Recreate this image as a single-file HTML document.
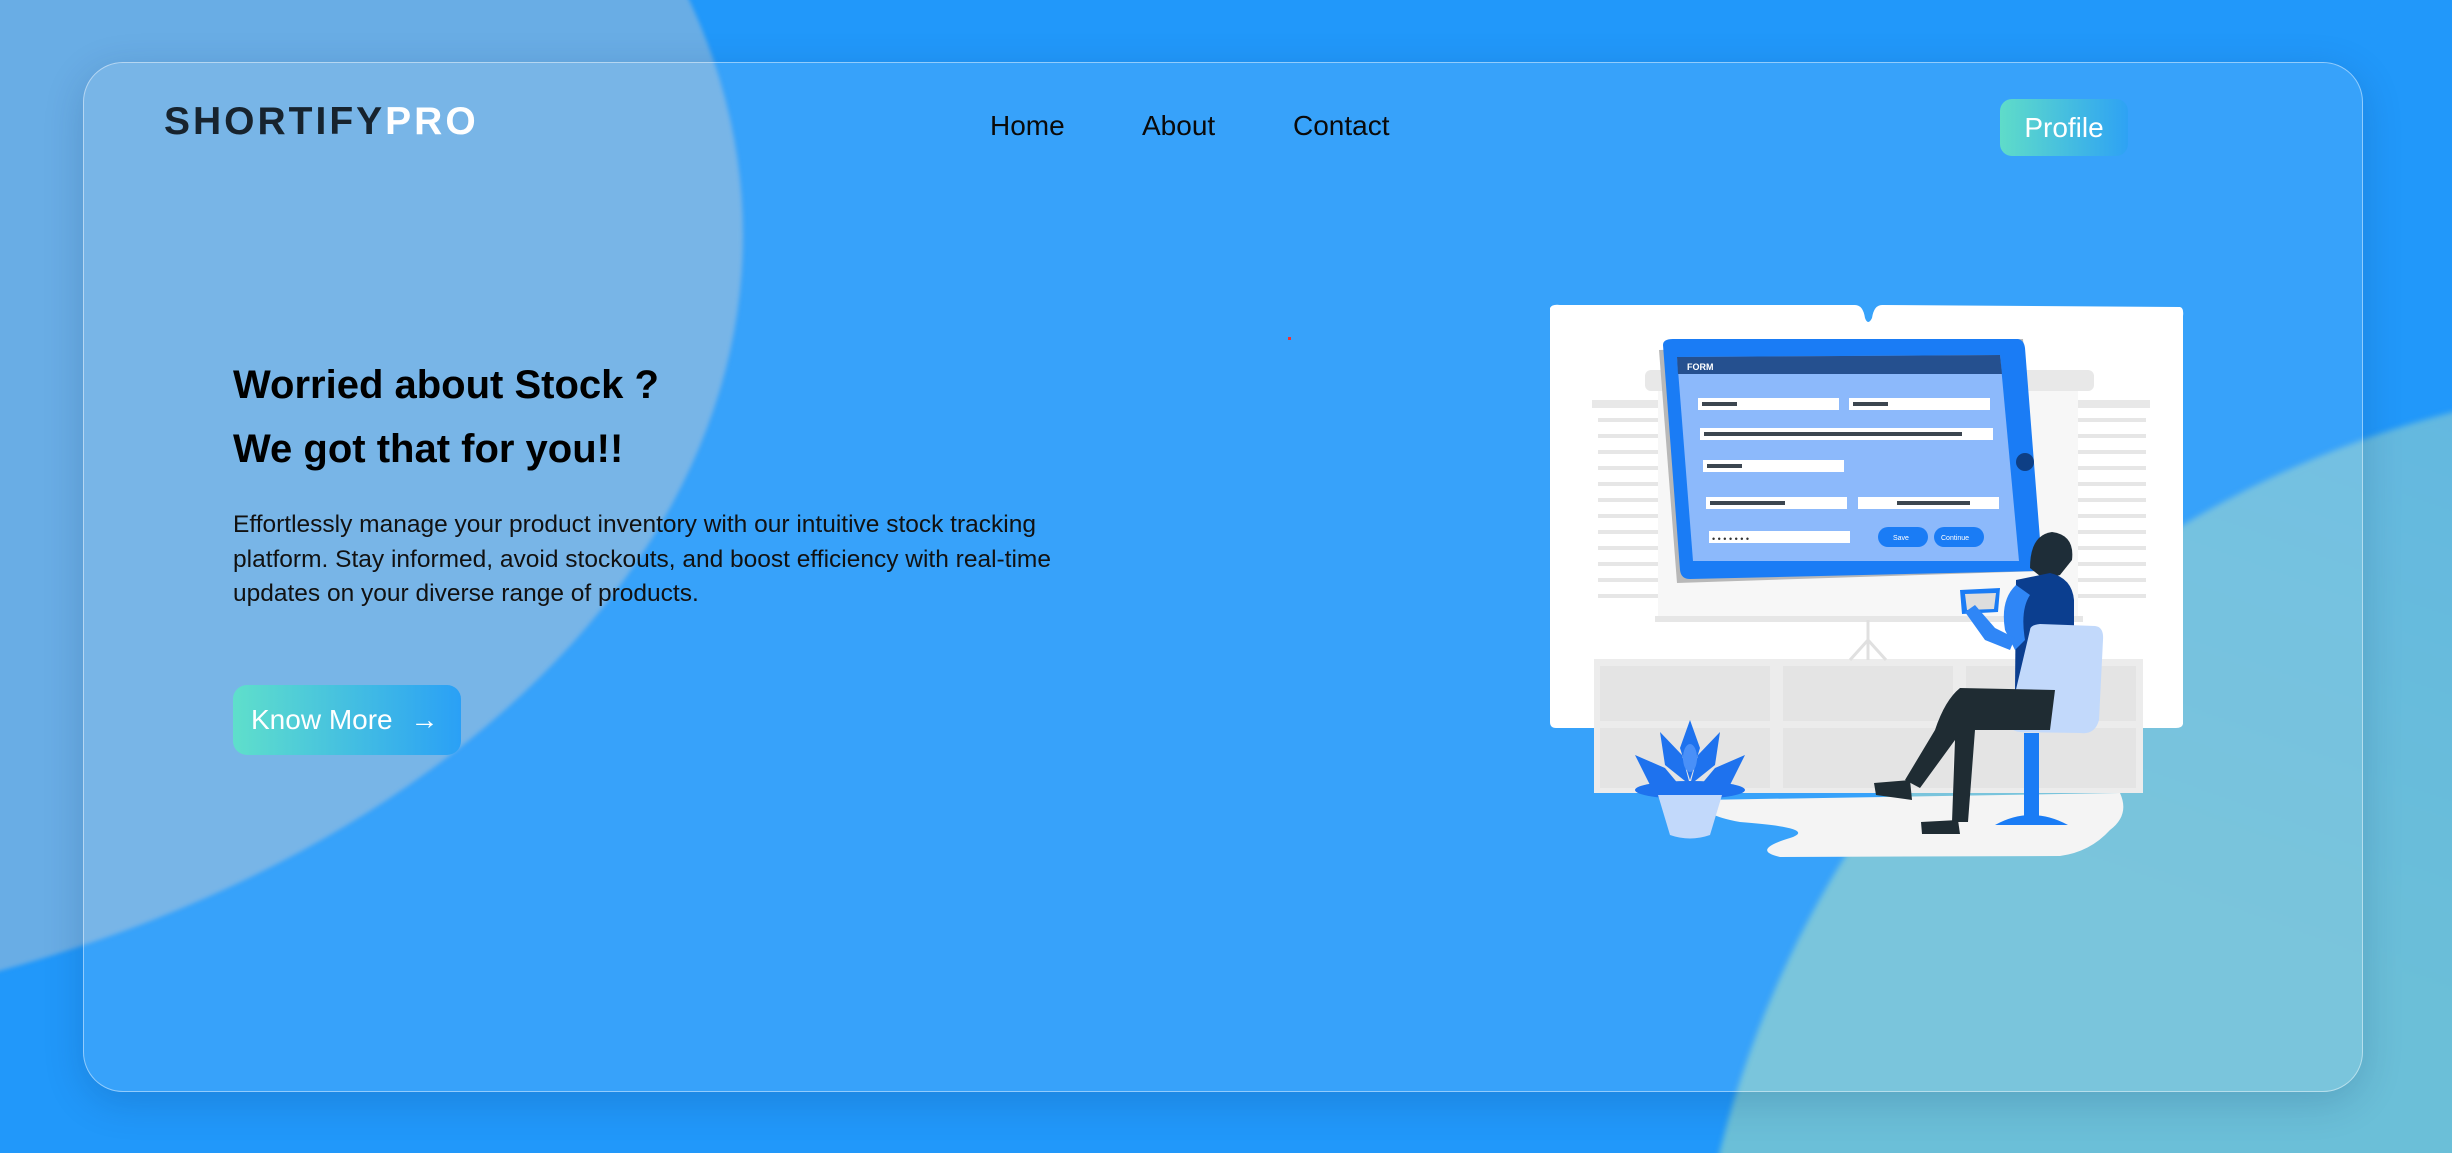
<!DOCTYPE html>
<html><head><meta charset="utf-8"><style>
html,body{margin:0;padding:0;width:2452px;height:1153px;overflow:hidden;background:#2198fa;font-family:"Liberation Sans",sans-serif}
#wrap{position:relative;width:2452px;height:1153px;overflow:hidden}
.blobL{position:absolute;left:-1681px;top:-563px;width:2424px;height:1596px;border-radius:50%;background:#69ade5;filter:blur(2px)}
.blobR{position:absolute;left:1690px;top:380px;width:2032px;height:2032px;border-radius:50%;background:linear-gradient(200deg,#5eb3e6 0%,#6bbfd8 40%,#6cc0d6 100%);filter:blur(3px)}
.card{position:absolute;left:83px;top:62px;width:2280px;height:1030px;border-radius:40px;background:rgba(255,255,255,0.1);border:1.5px solid rgba(255,255,255,0.45);box-shadow:0 10px 40px rgba(0,40,90,0.18);box-sizing:border-box}
.logo{position:absolute;left:164px;top:100px;font-size:39px;font-weight:bold;letter-spacing:3px;color:#17232e}
.logo span{color:#fff}
.nav{position:absolute;top:110px;font-size:28px;color:#0a0a0a}
.profile{position:absolute;left:2000px;top:99px;width:128px;height:57px;border-radius:12px;background:linear-gradient(90deg,#5fdcc9,#2ea2f4);color:#fff;font-size:28px;text-align:center;line-height:57px}
h1{position:absolute;left:233px;top:353px;margin:0;font-size:40px;line-height:64px;font-weight:bold;color:#000}
.p{position:absolute;left:233px;top:508px;font-size:24.5px;line-height:34.5px;color:#111}
.btn{position:absolute;left:233px;top:685px;width:228px;height:70px;border-radius:14px;background:linear-gradient(90deg,#5fdfcb,#2aa0f6);color:#fff;font-size:28px;line-height:70px;box-sizing:border-box;padding-left:18px}
</style></head><body><div id="wrap">
<div class="blobL"></div>
<div class="blobR"></div>
<div class="card"></div>
<div class="logo">SHORTIFY<span>PRO</span></div>
<div class="nav" style="left:990px">Home</div>
<div class="nav" style="left:1142px">About</div>
<div class="nav" style="left:1293px">Contact</div>
<div class="profile">Profile</div>
<h1>Worried about Stock ?<br>We got that for you!!</h1>
<div class="p">Effortlessly manage your product inventory with our intuitive stock tracking<br>platform. Stay informed, avoid stockouts, and boost efficiency with real-time<br>updates on your diverse range of products.</div>
<div class="btn">Know More <span style="margin-left:10px">→</span></div>
<div style="position:absolute;left:1288px;top:337px;width:3px;height:3px;background:#e33"></div>
<svg width="2452" height="1153" style="position:absolute;left:0;top:0">
<path d="M1550 308 Q1552 304 1560 305 L1855 305 Q1863 305 1865 318 Q1868 326 1872 318 Q1874 305 1882 305 L2180 307 Q2184 308 2183 316 L2183 724 Q2182 728 2176 728 L1556 728 Q1550 728 1550 722 Z" fill="#fff"/>
<rect x="1594" y="659" width="549" height="134" fill="#ececec"/>
<rect x="1600" y="666" width="170" height="55" fill="#e4e4e4"/><rect x="1783" y="666" width="170" height="55" fill="#e4e4e4"/><rect x="1966" y="666" width="170" height="55" fill="#e4e4e4"/>
<rect x="1600" y="728" width="170" height="60" fill="#e4e4e4"/><rect x="1783" y="728" width="170" height="60" fill="#e4e4e4"/><rect x="1966" y="728" width="170" height="60" fill="#e4e4e4"/>
<path d="M1700 800 L2120 793 Q2130 815 2110 830 Q2090 852 2060 856 L1780 857 Q1750 850 1790 838 Q1820 828 1740 822 Q1700 815 1700 800Z" fill="#f4f4f4"/>
<g fill="#e8e8e8">
<rect x="1592" y="400" width="66" height="8"/><rect x="2076" y="400" width="74" height="8"/>
</g>
<g stroke="#e6e6e6" stroke-width="4">
<path d="M1598 420H1658M1598 436H1658M1598 452H1658M1598 468H1658M1598 484H1658M1598 500H1658M1598 516H1658M1598 532H1658M1598 548H1658M1598 564H1658M1598 580H1658M1598 596H1658"/>
<path d="M2076 420H2146M2076 436H2146M2076 452H2146M2076 468H2146M2076 484H2146M2076 500H2146M2076 516H2146M2076 532H2146M2076 548H2146M2076 564H2146M2076 580H2146M2076 596H2146"/>
</g>
<rect x="1645" y="370" width="449" height="21" rx="6" fill="#e8e8e8"/>
<rect x="1658" y="391" width="420" height="230" fill="#f7f7f7"/>
<rect x="1655" y="616" width="428" height="6" fill="#e6e6e6"/>
<path d="M1868 620 L1868 660 M1868 640 L1850 660 M1868 640 L1886 660" stroke="#e0e0e0" stroke-width="3" fill="none"/>
<path d="M1659 350 L2023 339 L2042 571 L1677 583 Z" fill="#b8b8b8"/>
<path d="M1663 345 Q1663 339 1673 339 L2018 339 Q2024 340 2025 348 L2042 565 Q2042 571 2036 571 L1690 579 Q1681 579 1680 570 Z" fill="#1a7cf5"/>
<path d="M1677 357 L2000 355 L2019 561 L1693 561 Z" fill="#8cb9fb"/>
<path d="M1677 357 L2000 355 L2002 374 L1678 374 Z" fill="#25508f"/>
<text x="1687" y="370" font-size="9" font-weight="bold" fill="#fff">FORM</text>
<circle cx="2025" cy="462" r="9" fill="#0e3f85"/>
<rect x="1698" y="398" width="141" height="12" fill="#fff"/><rect x="1849" y="398" width="141" height="12" fill="#fff"/>
<rect x="1700" y="428" width="293" height="12" fill="#fff"/>
<rect x="1703" y="460" width="141" height="12" fill="#fff"/>
<rect x="1706" y="497" width="141" height="12" fill="#fff"/><rect x="1858" y="497" width="141" height="12" fill="#fff"/>
<rect x="1709" y="531" width="141" height="12" fill="#fff"/>
<g fill="#3c4650"><rect x="1702" y="402" width="35" height="4"/><rect x="1853" y="402" width="35" height="4"/><rect x="1704" y="432" width="258" height="4"/><rect x="1707" y="464" width="35" height="4"/><rect x="1710" y="501" width="75" height="4"/><rect x="1897" y="501" width="73" height="4"/></g>
<text x="1712" y="542" font-size="9" fill="#333">• • • • • • •</text>
<rect x="1878" y="527" width="50" height="20" rx="10" fill="#1a7cf5"/><rect x="1934" y="527" width="50" height="20" rx="10" fill="#1a7cf5"/>
<text x="1893" y="540" font-size="7" fill="#fff">Save</text><text x="1941" y="540" font-size="7" fill="#fff">Continue</text>
<path d="M2030 568 Q2030 535 2052 532 Q2075 535 2072 560 L2060 575 L2045 580 Z" fill="#1e2d38"/>
<path d="M2016 580 L2050 573 Q2072 578 2074 600 L2074 690 L2015 690 Z" fill="#0b3e8f"/>
<path d="M1960 590 L2000 588 L1998 612 L1962 614 Z" fill="#1a7cf5"/><path d="M1965 594 L1996 593 L1994 609 L1967 610 Z" fill="#ddd"/>
<path d="M2016 585 Q2000 600 2005 630 L2015 650 L2025 640 Q2020 610 2030 595 Z" fill="#2f86f6"/>
<path d="M1965 612 L1985 640 L2010 650 L2015 638 L1995 628 L1975 605 Z" fill="#2f86f6"/>
<path d="M2030 630 Q2030 625 2040 624 L2095 626 Q2104 627 2103 640 L2099 720 Q2095 735 2080 733 L2020 732 Q2005 730 2010 715 Z" fill="#c2d9fb"/>
<rect x="2024" y="733" width="15" height="92" fill="#1a7cf5"/>
<path d="M1995 825 Q2031 805 2068 825 Z" fill="#1a7cf5"/>
<path d="M2055 690 L1960 688 Q1945 700 1935 730 L1905 780 L1920 788 L1955 740 L1952 822 L1968 822 L1975 730 L2050 730 Z" fill="#1f2c33"/>
<path d="M1874 783 L1910 780 L1912 800 L1876 795 Z" fill="#1f2c33"/>
<path d="M1921 822 L1958 820 L1960 834 L1922 834 Z" fill="#1f2c33"/>
<g fill="#1e72ee">
<path d="M1690 720 L1700 748 L1690 780 L1680 748 Z"/>
<path d="M1660 732 L1682 755 L1690 785 L1665 765 Z"/><path d="M1720 732 L1698 755 L1690 785 L1715 765 Z"/>
<path d="M1635 755 L1665 768 L1685 792 L1650 785 Z"/><path d="M1745 755 L1715 768 L1695 792 L1730 785 Z"/>
<ellipse cx="1690" cy="790" rx="55" ry="9"/>
</g>
<ellipse cx="1690" cy="758" rx="7" ry="14" fill="#4a90f8"/>
<path d="M1658 795 L1722 795 L1710 835 Q1690 842 1670 835 Z" fill="#c2d9fb"/>
</svg>
</div></body></html>
